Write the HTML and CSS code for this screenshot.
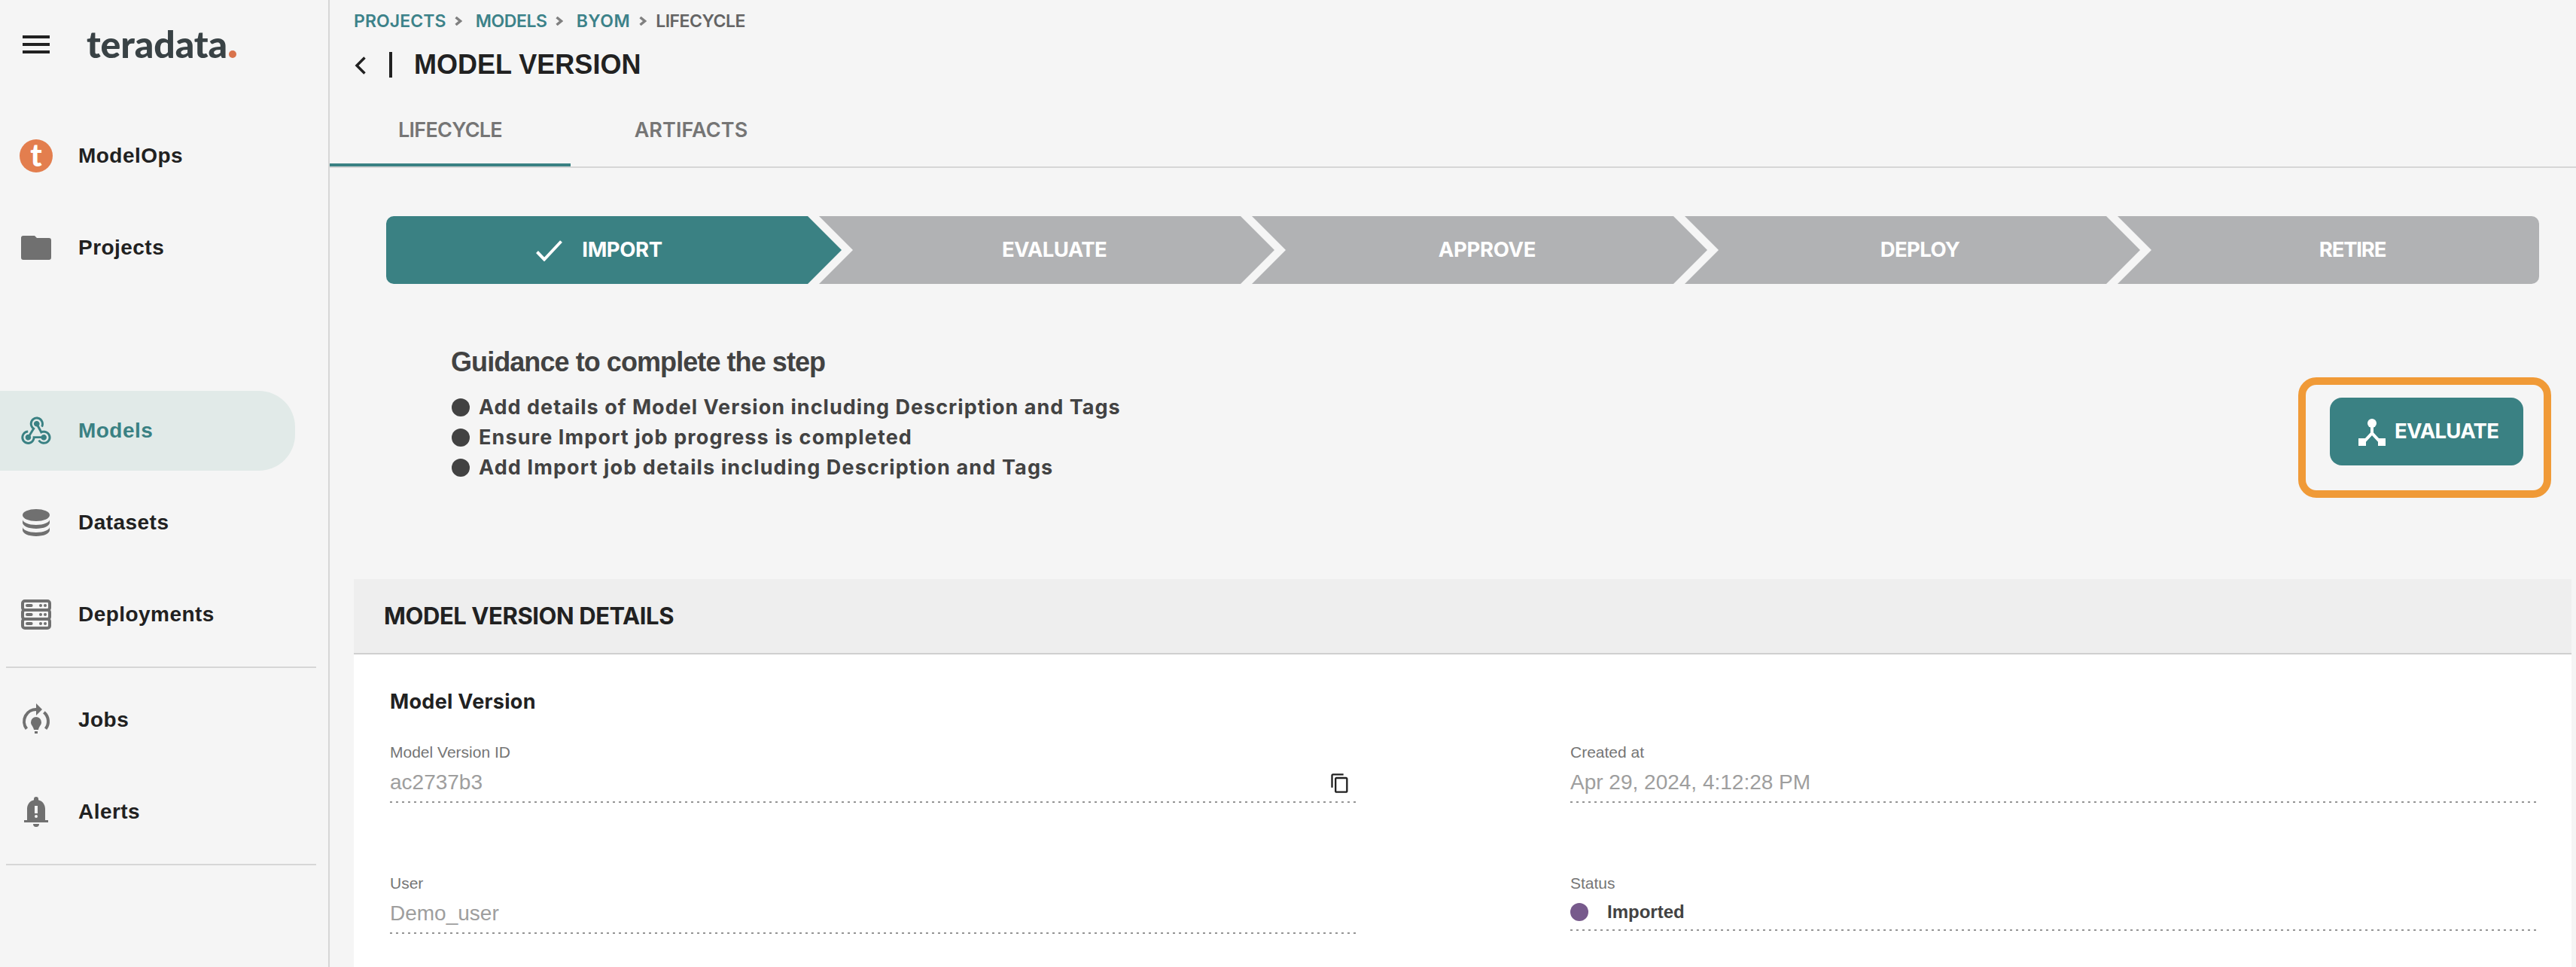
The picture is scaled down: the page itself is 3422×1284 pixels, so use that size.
FILE: index.html
```
<!DOCTYPE html>
<html lang="en">
<head>
<meta charset="utf-8">
<title>Model Version</title>
<link rel="stylesheet" href="styles.css">
</head>
<body>
<div class="app">
  <aside class="sidebar">
    <div class="brand">
      <svg class="icon icon--menu" viewBox="0 0 24 24"><path d="M3 18h18v-2H3v2zm0-5h18v-2H3v2zm0-7v2h18V6H3z"/></svg>
      <div class="logo"><span class="logo-text">teradata</span><span class="logo-dot"></span></div>
    </div>
    <nav class="nav">
      <a class="nav-item"><span class="ops-badge"><span class="ops-letter">t</span></span><span class="nav-label">ModelOps</span></a>
      <a class="nav-item">
        <svg class="icon" viewBox="0 0 24 24"><path d="M3.5 4H11l1.5 1.5h8A1.5 1.5 0 0 1 22 7v11.500a1.500 1.500 0 0 1-1.500 1.500h-17A1.500 1.500 0 0 1 2 18.500v-13A1.500 1.500 0 0 1 3.500 4z"/></svg>
        <span class="nav-label">Projects</span></a>
      <a class="nav-item nav-item--active">
        <svg class="icon" viewBox="0 0 24 24"><path d="M10.46,19C9,21.07 6.15,21.59 4.09,20.15C2.04,18.71 1.56,15.84 3,13.75C3.87,12.5 5.21,11.83 6.58,11.77L6.63,13.2C5.72,13.27 4.84,13.74 4.27,14.56C3.27,16 3.58,17.94 4.95,18.91C6.33,19.87 8.26,19.5 9.26,18.07C9.57,17.62 9.75,17.13 9.82,16.63V15.62L15.4,15.58L15.47,15.47C16,14.55 17.15,14.23 18.05,14.75C18.95,15.27 19.26,16.43 18.73,17.35C18.2,18.26 17.04,18.58 16.14,18.06C15.73,17.83 15.44,17.46 15.31,17.04L11.24,17.06C11.13,17.73 10.87,18.38 10.46,19M17.74,11.86C20.27,12.17 22.07,14.44 21.76,16.93C21.45,19.43 19.15,21.2 16.62,20.89C15.13,20.71 13.9,19.86 13.19,18.68L14.43,17.96C14.92,18.73 15.75,19.28 16.75,19.41C18.5,19.62 20.05,18.43 20.26,16.76C20.47,15.09 19.23,13.56 17.5,13.35C16.96,13.29 16.44,13.36 15.97,13.53L15.12,13.97L12.54,9.2H12.32C11.26,9.16 10.41,8.29 10.44,7.25C10.47,6.21 11.4,5.4 12.45,5.44C13.5,5.5 14.33,6.35 14.3,7.39C14.28,7.83 14.11,8.23 13.84,8.54L15.74,12.05C16.36,11.85 17.04,11.78 17.74,11.86M8.25,9.14C7.25,6.79 8.31,4.1 10.62,3.12C12.94,2.14 15.62,3.25 16.62,5.6C17.21,6.97 17.09,8.47 16.42,9.67L15.18,8.95C15.6,8.14 15.67,7.15 15.27,6.22C14.59,4.62 12.78,3.85 11.23,4.5C9.67,5.16 8.97,7 9.65,8.6C9.93,9.26 10.4,9.77 10.97,10.11L11.36,10.32L8.29,15.31C8.32,15.36 8.36,15.42 8.39,15.5C8.88,16.41 8.54,17.56 7.62,18.05C6.71,18.54 5.56,18.18 5.06,17.24C4.57,16.31 4.91,15.16 5.83,14.67C6.22,14.46 6.65,14.41 7.06,14.5L9.37,10.73C8.9,10.3 8.5,9.76 8.25,9.14Z"/></svg>
        <span class="nav-label">Models</span></a>
      <a class="nav-item">
        <svg class="icon" viewBox="0 0 24 24"><ellipse cx="12" cy="7" rx="9" ry="4"/><path d="M3 9.900c0 2 4 3.600 9 3.600s9-1.600 9-3.600V12c0 2.200-4 4-9 4s-9-1.800-9-4zM3 14.900c0 2 4 3.600 9 3.600s9-1.600 9-3.600V17c0 2.200-4 4-9 4s-9-1.800-9-4z"/></svg>
        <span class="nav-label">Datasets</span></a>
      <a class="nav-item">
        <svg class="icon" viewBox="0 0 24 24"><g fill="none" stroke="currentColor" stroke-width="2"><rect x="3" y="3" width="18" height="6" rx="1.500"/><rect x="3" y="9" width="18" height="6" rx="1.500"/><rect x="3" y="15" width="18" height="6" rx="1.500"/><path stroke-linecap="round" d="M6 6h2.800M6 12h2.800M6 18h2.800"/></g><circle cx="15" cy="6" r="1"/><circle cx="18" cy="6" r="1"/><circle cx="15" cy="12" r="1"/><circle cx="18" cy="12" r="1"/><circle cx="15" cy="18" r="1"/><circle cx="18" cy="18" r="1"/></svg>
        <span class="nav-label">Deployments</span></a>
      <hr class="divider">
      <a class="nav-item">
        <svg class="icon" viewBox="0 0 24 24"><path fill="none" stroke="currentColor" stroke-width="2" d="M5.700 17.900A8 8 0 0 1 12.500 5M17.200 6.900a8 8 0 0 1 1.100 11"/><path d="M12 1l4 4-4 4zM12 10a3.500 3.500 0 0 1 3.500 3.500c0 2-1.700 2.800-2 5h-3c-.3-2.200-2-3-2-5A3.500 3.500 0 0 1 12 10zM11 19.500h2V21h-2z"/></svg>
        <span class="nav-label">Jobs</span></a>
      <a class="nav-item">
        <svg class="icon" viewBox="0 0 24 24"><path fill-rule="evenodd" d="M12 2a1.500 1.500 0 0 1 1.500 1.500v.6C16.300 4.800 18 7.100 18 10v7.500h2V19H4v-1.500h2V10c0-2.900 1.700-5.200 4.500-5.900v-.6A1.500 1.500 0 0 1 12 2zM11 8v5h2V8zM12 14a1 1 0 0 0 0 2 1 1 0 0 0 0-2zM10 20h4a2 2 0 0 1-4 0z"/></svg>
        <span class="nav-label">Alerts</span></a>
      <hr class="divider">
    </nav>
  </aside>

  <main class="main">
    <div class="breadcrumb">
      <a class="crumb">PROJECTS</a><svg class="sep" viewBox="0 0 10 12"><path d="M1.500 1l6 5-6 5"/></svg>
      <a class="crumb crumb--tight">MODELS</a><svg class="sep" viewBox="0 0 10 12"><path d="M1.500 1l6 5-6 5"/></svg>
      <a class="crumb crumb--wide">BYOM</a><svg class="sep sep--last" viewBox="0 0 10 12"><path d="M1.500 1l6 5-6 5"/></svg>
      <span class="crumb crumb--current">LIFECYCLE</span>
    </div>
    <div class="title-row">
      <svg class="back" viewBox="0 0 16 24"><path d="M13.500 1.500L3 12l10.500 10.500"/></svg>
      <span class="title-bar"></span>
      <h1 class="title">MODEL VERSION</h1>
    </div>
    <div class="tabs">
      <div class="tab tab--active">LIFECYCLE</div>
      <div class="tab tab--artifacts">ARTIFACTS</div>
    </div>

    <div class="stepper">
      <div class="step step--first"><svg class="check" viewBox="0 0 36 28"><path d="M1.500 15.500L11 25.500 33.500 1.500"/></svg>IMPORT</div>
      <div class="step">EVALUATE</div>
      <div class="step step--approve">APPROVE</div>
      <div class="step">DEPLOY</div>
      <div class="step step--last">RETIRE</div>
    </div>

    <section class="guidance">
      <div>
        <h2 class="guidance-title">Guidance to complete the step</h2>
        <ul class="guidance-list">
          <li>Add details of Model Version including Description and Tags</li>
          <li>Ensure Import job progress is completed</li>
          <li>Add Import job details including Description and Tags</li>
        </ul>
      </div>
      <div class="action">
        <button class="evaluate"><svg class="hub" viewBox="0 0 18 18"><circle cx="9" cy="3" r="3"/><path d="M0 13h5v5H0zM13 13h5v5h-5z"/><path fill="none" stroke="currentColor" stroke-width="2" d="M9 4v5.600M3.800 15.200L9 9.600l5.200 5.600"/></svg>EVALUATE</button>
        <span class="highlight"></span>
      </div>
    </section>

    <section class="panel">
      <h2 class="panel-header">MODEL VERSION DETAILS</h2>
      <div class="panel-body">
        <h3 class="panel-subtitle">Model Version</h3>
        <div class="fields">
          <div class="field">
            <div class="label">Model Version ID</div>
            <div class="value">ac2737b3<svg class="copy" viewBox="0 0 24 24"><path d="M16 1H4c-1.100 0-2 .9-2 2v14h2V3h12V1zm3 4H8c-1.100 0-2 .9-2 2v14c0 1.100.9 2 2 2h11c1.100 0 2-.9 2-2V7c0-1.100-.9-2-2-2zm0 16H8V7h11v14z"/></svg></div>
          </div>
          <div class="field">
            <div class="label">Created at</div>
            <div class="value">Apr 29, 2024, 4:12:28 PM</div>
          </div>
          <div class="field">
            <div class="label">User</div>
            <div class="value">Demo_user</div>
          </div>
          <div class="field">
            <div class="label">Status</div>
            <div class="value value--status"><span class="status-dot"></span>Imported</div>
          </div>
        </div>
      </div>
    </section>
  </main>
</div>
</body>
</html>
```
FILE: styles.css
```
* { box-sizing: border-box; }

body {
  margin: 0;
  background: #f5f5f5;
  color: #212121;
  font-family: "Liberation Sans", Arial, sans-serif;
}

h1, h2, h3, ul { margin: 0; padding: 0; }

.app { display: flex; height: 1284px; overflow: hidden; }

/* Sidebar */
.sidebar { flex: none; width: 438px; border-right: 2px solid #d6d6d6; }
.brand { display: flex; align-items: center; gap: 43px; height: 118px; padding-left: 24px; }
.icon { flex: none; display: block; width: 48px; height: 48px; fill: currentColor; }
.logo { display: flex; align-items: flex-end; gap: 2px; padding-bottom: 3px; }
.logo-text {
  font: 900 50px/60px Lato, sans-serif;
  letter-spacing: -0.1px;
  color: #394245;
}
.logo-dot { width: 10px; height: 10px; margin-bottom: 11px; border-radius: 50%; background: #d9734c; }

.nav { display: flex; flex-direction: column; gap: 16px; padding-top: 36px; }
.nav-item {
  display: flex;
  align-items: center;
  gap: 32px;
  width: 392px;
  height: 106px;
  padding-left: 24px;
  border-radius: 0 48px 48px 0;
  color: #707070;
}
.nav-item--active { margin-top: 121px; background: #e1eae8; color: #3a8183; }
.nav-label {
  font-size: 28px;
  line-height: 40px;
  font-weight: 700;
  letter-spacing: 0.46px;
  color: #212121;
}
.nav-item--active .nav-label { color: inherit; }
.ops-badge {
  display: flex;
  align-items: center;
  justify-content: center;
  width: 44px;
  height: 44px;
  margin: 0 2px;
  border-radius: 50%;
  background: #e37e4e;
}
.ops-letter { padding-bottom: 3px; font: 900 41px/44px Lato, sans-serif; color: #fff; }
.divider { width: 412px; height: 2px; margin: 0 8px; border: 0; background: #d6d6d6; }

/* Page header */
.main { flex: 1; min-width: 0; }
.breadcrumb {
  display: flex;
  align-items: center;
  height: 54px;
  padding: 1px 0 0 32px;
  font: 600 23px/54px Inter, sans-serif;
}
.crumb { letter-spacing: 0.1px; color: #3c8289; }
.crumb--tight { letter-spacing: -0.4px; }
.crumb--wide { letter-spacing: 0.5px; }
.crumb--current { letter-spacing: -0.5px; color: #646464; }
.sep { width: 10px; height: 12px; margin: 1px 18px 0 11px; fill: none; stroke: #808080; stroke-width: 3.4; }
.sep--last { margin: 1px 12px 0; }

.title-row { display: flex; align-items: center; height: 64px; padding-left: 33px; }
.back { width: 16px; height: 24px; margin-top: 2px; fill: none; stroke: #212121; stroke-width: 3.5; }
.title-bar { width: 4px; height: 34px; margin: 0 29px 0 30px; background: #212121; }
.title { font-size: 36px; line-height: 64px; font-weight: 700; }

.tabs { display: flex; height: 105px; border-bottom: 2px solid #d6d6d6; }
.tab {
  width: 320px;
  padding-top: 10px;
  text-align: center;
  font: 600 27px/89px Inter, sans-serif;
  letter-spacing: -0.75px;
  color: #757575;
}
.tab--active { border-bottom: 4px solid #3a8183; }
.tab--artifacts { letter-spacing: 0.1px; }

/* Stepper */
.stepper { display: flex; margin: 64px 49px 0 75px; }
.step {
  display: flex;
  align-items: center;
  justify-content: center;
  flex: none;
  width: 605px;
  height: 90px;
  margin-left: -30px;
  padding: 0 0 2px 20px;
  background: #b1b2b4;
  clip-path: polygon(0 0, calc(100% - 45px) 0, 100% 50%, calc(100% - 45px) 100%, 0 100%, 45px 50%);
  color: #fff;
  font: 700 27.5px/40px Inter, sans-serif;
  letter-spacing: -0.6px;
}
.step--first {
  gap: 25px;
  margin-left: 0;
  padding: 0 39px 2px 0;
  border-radius: 10px 0 0 10px;
  background: #3a8183;
  clip-path: polygon(0 0, calc(100% - 45px) 0, 100% 50%, calc(100% - 45px) 100%, 0 100%);
  letter-spacing: -0.4px;
}
.step--approve { letter-spacing: -0.3px; }
.step--last {
  width: 560px;
  padding-left: 64px;
  border-radius: 0 10px 10px 0;
  clip-path: polygon(0 0, 100% 0, 100% 100%, 0 100%, 45px 50%);
  letter-spacing: -1.2px;
}
.check { width: 36px; height: 28px; margin-top: 3px; fill: none; stroke: #fff; stroke-width: 4; }

/* Guidance */
.guidance { display: flex; justify-content: space-between; margin: 84px 70px 0 162px; color: #424242; }
.guidance-title { margin-left: -1px; font-size: 36px; line-height: 40px; letter-spacing: -0.93px; }
.guidance-list { margin-top: 20px; list-style: none; font: 700 27px/40px Inter, sans-serif; letter-spacing: 1.02px; }
.guidance-list li { display: flex; align-items: center; gap: 12px; }
.guidance-list li + li { letter-spacing: 1.13px; }
.guidance-list li::before { content: ""; width: 24px; height: 24px; border-radius: 50%; background: #424242; }

.action { position: relative; margin-top: 67px; height: 90px; }
.evaluate {
  display: flex;
  align-items: center;
  gap: 12px;
  width: 257px;
  height: 90px;
  padding: 0 0 2px 38px;
  border: 0;
  border-radius: 16px;
  background: #3a8183;
  color: #fff;
  font: 700 27.5px/40px Inter, sans-serif;
  letter-spacing: -0.7px;
}
.hub { flex: none; width: 36px; height: 36px; margin-top: 4px; fill: currentColor; }
.highlight {
  position: absolute;
  left: -42px;
  top: -27px;
  width: 336px;
  height: 160px;
  border: 10px solid #f09a37;
  border-radius: 24px;
}

/* Details panel */
.panel { width: 2946px; height: 600px; margin: 128px 0 0 32px; background: #fff; }
.panel-header {
  height: 100px;
  padding-left: 40px;
  border-bottom: 2px solid #cfcfcf;
  background: #eee;
  font: 700 31px/98px Inter, sans-serif;
  letter-spacing: -0.42px;
}
.panel-body { padding: 43px 46px 0 48px; }
.panel-subtitle { font: 700 27px/40px Inter, sans-serif; letter-spacing: 0.3px; }
.fields { display: grid; grid-template-columns: 1283px 1284px; column-gap: 285px; row-gap: 92px; margin-top: 32px; }
.label { font-size: 21px; line-height: 30px; color: #757575; }
.value {
  display: flex;
  align-items: center;
  justify-content: space-between;
  height: 48px;
  margin-top: 4px;
  padding-bottom: 7px;
  background: repeating-linear-gradient(90deg, #949494 0 3px, transparent 3px 8px) left bottom / 100% 2px no-repeat;
  font-size: 28px;
  line-height: 41px;
  color: #9e9e9e;
}
.copy { width: 28px; height: 28px; margin: 3px 7px 0 0; fill: #212121; }
.value--status {
  justify-content: flex-start;
  gap: 25px;
  height: 44px;
  font-size: 24px;
  line-height: 37px;
  font-weight: 700;
  color: #424242;
}
.status-dot { width: 24px; height: 24px; border-radius: 50%; background: #775a8c; }
```
